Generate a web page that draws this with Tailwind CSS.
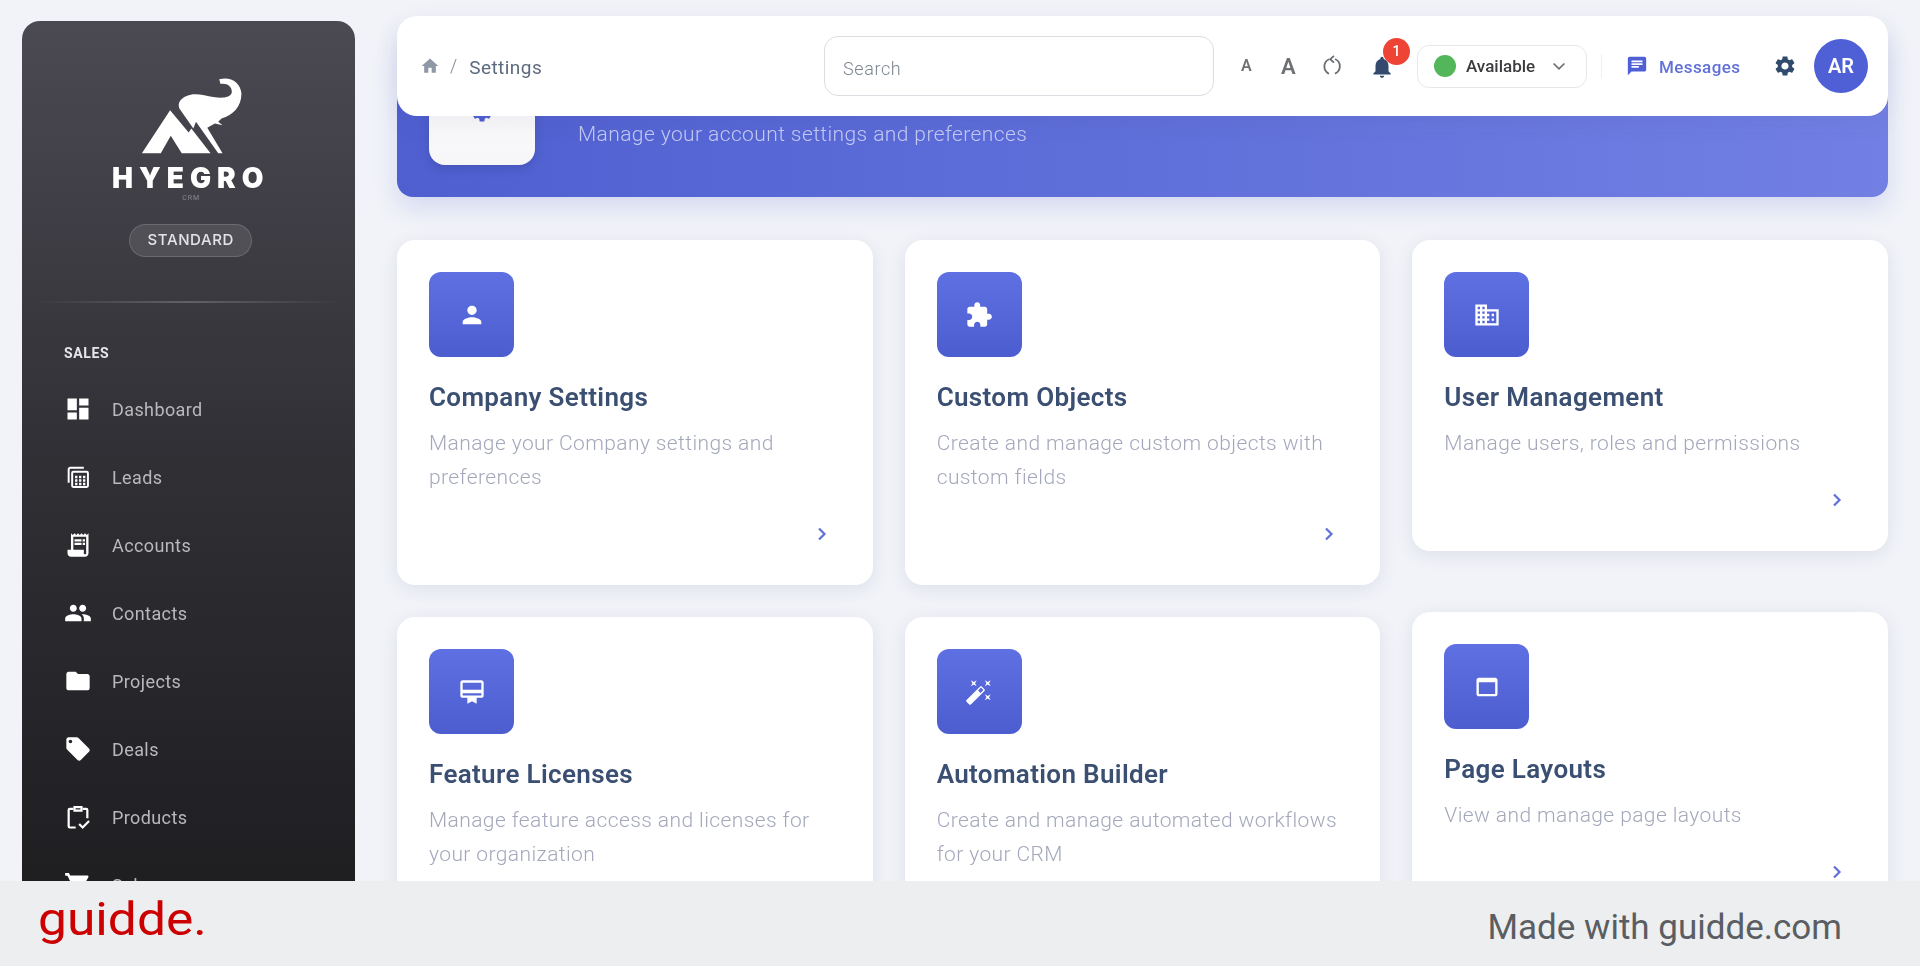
<!DOCTYPE html>
<html>
<head>
<meta charset="utf-8">
<title>Settings</title>
<script src="https://cdn.jsdelivr.net/npm/@tailwindcss/browser@4"></script>
</head>
<body class="bg-[#edeef0] font-[Roboto,sans-serif]">
<div class="w-[1920px] h-[966px] overflow-hidden flex flex-col">
  <div class="h-[881px] shrink-0 overflow-hidden bg-[#f1f3f8] flex pl-[21.5px] pr-[32px] blur-[0.6px]">
    <!-- Sidebar -->
    <aside class="w-[333.5px] shrink-0 mt-[21px] h-[900px] rounded-t-[18px] bg-gradient-to-b from-[#4b4a53] via-[#302f34] to-[#1d1d20] flex flex-col items-stretch">
      <div class="flex flex-col items-center">
        <svg class="mt-[57px] ml-[5px]" width="102" height="77" viewBox="150 58 306 232" fill="#fff">
          <path d="M240 155L296 222L304 210L362 285H275L242 232L212 285H155Z"/>
          <path d="M268 150C262 135 270 120 290 112C315 100 345 112 370 115C395 120 418 118 425 105C430 88 415 72 392 76L388 62C420 52 452 70 455 105C455 145 430 170 395 180L385 190L398 200L375 195L352 208L398 285H385L318 190L310 210Z"/>
        </svg>
        <div class="mt-[10px] ml-[5px] h-[26px] leading-[26px] text-[28px] font-black text-white tracking-[6px] font-[Inter,sans-serif]">HYEGRO</div>
        <div class="mt-[2px] ml-[6px] h-[10px] leading-[10px] text-[7px] text-[#8a8a90] tracking-[1px]">CRM</div>
        <div class="mt-[21px] ml-[5px] w-[123px] h-[33px] rounded-full bg-white/10 border border-white/15 flex items-center justify-center text-[15px] font-medium text-[#e4e4e8] tracking-[0.6px] font-[Inter,sans-serif]">STANDARD</div>
      </div>
      <div class="mt-[44px] mx-[12px] h-[2px] bg-gradient-to-r from-transparent via-white/20 to-transparent"></div>
      <div class="mt-[40px] pl-[42.5px] text-[14px] font-bold text-[#e6e6e8] tracking-[0.6px] leading-[20px]">SALES</div>
      <nav class="mt-[12px] pl-[42.5px] flex flex-col text-[18px] text-[#b9b9bd] tracking-[0.4px]">
        <a class="h-[68px] flex items-center gap-[20px]"><svg width="28" height="28" viewBox="0 0 24 24" fill="#fff"><path d="M3 13h8V3H3v10zm0 8h8v-6H3v6zm10 0h8V11h-8v10zm0-18v6h8V3h-8z"/></svg>Dashboard</a>
        <a class="h-[68px] flex items-center gap-[20px]"><svg width="28" height="28" viewBox="0 0 24 24" fill="none" stroke="#fff" stroke-width="1.7"><path d="M4 17V5.5A1.5 1.5 0 0 1 5.5 4H17"/><path d="M7 19.5V8.5A1 1 0 0 1 8 7.5h11.5a1 1 0 0 1 1 1v11a1 1 0 0 1-1 1H8a1 1 0 0 1-1-1z"/><path d="M9.5 12h9M9.5 15h9M9.5 18h9" stroke-width="2" stroke-dasharray="2 1.4"/></svg>Leads</a>
        <a class="h-[68px] flex items-center gap-[20px]"><svg width="28" height="28" viewBox="0 0 24 24" fill="#fff"><path d="M19.5 3.5L18 2l-1.5 1.5L15 2l-1.5 1.5L12 2l-1.5 1.5L9 2 7.5 3.5 6 2v14H3v3c0 1.66 1.34 3 3 3h12c1.66 0 3-1.34 3-3V2l-1.5 1.5zM19 19c0 .55-.45 1-1 1s-1-.45-1-1v-3H8V5h11v14zM9 7h6v2H9zm7 0h2v2h-2zM9 10h6v2H9zm7 0h2v2h-2z"/></svg>Accounts</a>
        <a class="h-[68px] flex items-center gap-[20px]"><svg width="28" height="28" viewBox="0 0 24 24" fill="#fff"><path d="M16 11c1.66 0 2.99-1.34 2.99-3S17.66 5 16 5c-1.66 0-3 1.34-3 3s1.34 3 3 3zm-8 0c1.66 0 2.99-1.34 2.99-3S9.66 5 8 5C6.34 5 5 6.34 5 8s1.34 3 3 3zm0 2c-2.33 0-7 1.17-7 3.5V19h14v-2.5c0-2.33-4.67-3.5-7-3.5zm8 0c-.29 0-.62.02-.97.05 1.16.84 1.97 1.97 1.97 3.45V19h6v-2.5c0-2.33-4.67-3.5-7-3.5z"/></svg>Contacts</a>
        <a class="h-[68px] flex items-center gap-[20px]"><svg width="28" height="28" viewBox="0 0 24 24" fill="#fff"><path d="M10 4H4c-1.1 0-1.99.9-1.99 2L2 18c0 1.1.9 2 2 2h16c1.1 0 2-.9 2-2V8c0-1.1-.9-2-2-2h-8l-2-2z"/></svg>Projects</a>
        <a class="h-[68px] flex items-center gap-[20px]"><svg width="28" height="28" viewBox="0 0 24 24" fill="#fff"><path d="M21.41 11.58l-9-9C12.05 2.22 11.55 2 11 2H4c-1.1 0-2 .9-2 2v7c0 .55.22 1.05.59 1.42l9 9c.36.36.86.58 1.41.58.55 0 1.05-.22 1.41-.59l7-7c.37-.36.59-.86.59-1.41 0-.55-.23-1.06-.59-1.42zM5.5 7C4.67 7 4 6.33 4 5.5S4.67 4 5.5 4 7 4.67 7 5.5 6.33 7 5.5 7z"/></svg>Deals</a>
        <a class="h-[68px] flex items-center gap-[20px]"><svg width="28" height="28" viewBox="0 0 24 24" fill="none" stroke="#fff" stroke-width="1.9"><path d="M8 5H5a1 1 0 0 0-1 1v14a1 1 0 0 0 1 1h5"/><path d="M16 5h3a1 1 0 0 1 1 1v7"/><path d="M9 3.5h6v3H9z"/><path d="M13 18l3 3 5.5-5.5"/></svg>Products</a>
        <a class="h-[68px] flex items-center gap-[20px]"><svg width="28" height="28" viewBox="0 0 24 24" fill="#fff"><path d="M7 18c-1.1 0-1.99.9-1.99 2S5.9 22 7 22s2-.9 2-2-.9-2-2-2zM1 2v2h2l3.6 7.59-1.35 2.45c-.16.28-.25.61-.25.96 0 1.1.9 2 2 2h12v-2H7.42c-.14 0-.25-.11-.25-.25l.03-.12.9-1.83h7.45c.75 0 1.41-.41 1.75-1.03l3.58-6.49c.08-.14.12-.31.12-.48 0-.55-.45-1-1-1H5.21l-.94-2H1z"/></svg>Sales</a>
      </nav>
    </aside>

    <!-- Main -->
    <main class="relative ml-[42px] w-[1491px] shrink-0 pt-[27px]">
      <!-- Top bar floats over the banner -->
      <header class="absolute z-10 top-[16px] left-0 right-0 h-[100px] bg-white rounded-[20px] shadow-[0_6px_24px_rgba(60,70,120,0.08)] flex items-center pl-[23px] pr-[20px]">
        <div class="w-[404px] flex items-center">
          <svg width="20" height="20" viewBox="0 0 24 24" fill="#8f98a6"><path d="M10 20v-6h4v6h5v-8h3L12 3 2 12h3v8z"/></svg>
          <span class="ml-[10px] text-[18px] font-light text-[#7c8594] relative -top-[1px]">/</span>
          <span class="ml-[12px] text-[19px] tracking-[0.45px] text-[#5d6a7e] relative top-[2px]">Settings</span>
        </div>
        <div class="w-[390px] h-[60px] rounded-[14px] border border-[#dcdde2] flex items-center pl-[18px]"><span class="text-[18px] tracking-[0.6px] font-light text-[#7d8592] relative top-[2px]">Search</span></div>
        <div class="ml-[27px] w-[16px] text-[16px] font-semibold text-[#6f7072]">A</div>
        <div class="ml-[24px] w-[20px] text-[22px] font-semibold text-[#6f7072]">A</div>
        <svg class="ml-[19px]" width="24" height="24" viewBox="0 0 24 24" fill="none" stroke="#6a6d70" stroke-width="1.8"><path d="M9 5.2A8 8 0 0 0 9 19.7"/><path d="M15 5A8 8 0 0 1 15 19.7"/><path d="M14 1.800L10.200 5.200L14 8.600"/></svg>
        <div class="relative ml-[25px] w-[26px] h-[26px] top-[1px]">
          <svg width="26" height="26" viewBox="0 0 24 24" fill="#33496d"><path d="M12 22c1.100 0 2-.9 2-2h-4c0 1.100.9 2 2 2zm6-6v-5c0-3.070-1.630-5.640-4.500-6.320V4c0-.83-.67-1.500-1.500-1.500s-1.500.67-1.500 1.500v.68C7.640 5.360 6 7.920 6 11v5l-2 2v1h16v-1l-2-2z"/></svg>
          <span class="absolute -top-[16px] left-[14px] w-[27px] h-[27px] rounded-full bg-[#ee4435] text-white text-[14px] font-medium flex items-center justify-center">1</span>
        </div>
        <div class="ml-[22px] w-[170px] h-[43px] rounded-[12px] border border-[#e6e7ea] flex items-center pl-[16px]">
          <span class="w-[22px] h-[22px] rounded-full bg-[#54b65a]"></span>
          <span class="ml-[10px] text-[17px] font-medium text-[#3c3c3e] relative top-[1px]">Available</span>
          <svg class="ml-[14px]" width="20" height="20" viewBox="0 0 24 24" fill="none" stroke="#6a6d70" stroke-width="2"><path d="M5.500 9L12 15.500L18.500 9"/></svg>
        </div>
        <div class="ml-[14px] w-px h-[24px] bg-[#eef0f3]"></div>
        <svg class="ml-[24px]" width="22" height="22" viewBox="0 0 24 24" fill="#4f60d6"><path d="M20 2H4c-1.100 0-1.990.9-1.990 2L2 22l4-4h14c1.100 0 2-.9 2-2V4c0-1.100-.9-2-2-2zM6 9h12v2H6V9zm8 5H6v-2h8v2zm4-6H6V6h12v2z"/></svg>
        <span class="ml-[11px] w-[81px] whitespace-nowrap text-[17px] tracking-[0.4px] font-medium text-[#6070d8] relative top-[2px]">Messages</span>
        <svg class="ml-[32.500px]" width="24" height="24" viewBox="0 0 24 24" fill="#2f4a6b"><path d="M19.140 12.940c.04-.3.06-.61.06-.94 0-.32-.02-.64-.07-.94l2.030-1.580c.18-.14.23-.41.12-.61l-1.920-3.320c-.12-.22-.37-.29-.59-.22l-2.390.96c-.5-.38-1.030-.7-1.620-.94l-.36-2.540c-.04-.24-.24-.41-.48-.41h-3.840c-.24 0-.43.17-.47.41l-.36 2.540c-.59.24-1.130.57-1.620.94l-2.390-.96c-.22-.08-.47 0-.59.22L2.740 8.870c-.12.21-.08.47.12.61l2.030 1.580c-.05.3-.09.63-.09.94s.02.64.07.94l-2.030 1.580c-.18.14-.23.41-.12.61l1.920 3.320c.12.22.37.29.59.22l2.390-.96c.5.38 1.030.7 1.620.94l.36 2.540c.05.24.24.41.48.41h3.840c.24 0 .44-.17.47-.41l.36-2.540c.59-.24 1.130-.56 1.620-.94l2.390.96c.22.08.47 0 .59-.22l1.920-3.320c.12-.22.07-.47-.12-.61l-2.010-1.580zM12 15.600c-1.980 0-3.600-1.620-3.600-3.600s1.620-3.600 3.600-3.600 3.600 1.620 3.600 3.600-1.620 3.600-3.600 3.600z"/></svg>
        <div class="ml-[17.500px] w-[54px] h-[54px] rounded-full bg-[#4f60d6] text-white text-[20px] font-semibold flex items-center justify-center">AR</div>
      </header>

      <!-- Banner -->
      <section class="h-[170px] rounded-[16px] bg-gradient-to-r from-[#4f5fd0] to-[#7280e4] shadow-[0_10px_24px_rgba(79,95,208,0.18)] flex items-end pl-[32px] pb-[32px]">
        <div class="w-[106px] h-[106px] rounded-[16px] bg-gradient-to-b from-white to-[#f6f6f8] shadow-[0_4px_10px_rgba(30,40,100,0.2)] flex items-center justify-center">
          <svg width="24" height="24" viewBox="0 0 24 24" fill="#4f5fd0"><path d="M19.140 12.940c.04-.3.06-.61.06-.94 0-.32-.02-.64-.07-.94l2.030-1.580c.18-.14.23-.41.12-.61l-1.920-3.320c-.12-.22-.37-.29-.59-.22l-2.390.96c-.5-.38-1.030-.7-1.620-.94l-.36-2.540c-.04-.24-.24-.41-.48-.41h-3.840c-.24 0-.43.17-.47.41l-.36 2.540c-.59.24-1.130.57-1.620.94l-2.390-.96c-.22-.08-.47 0-.59.22L2.740 8.870c-.12.21-.08.47.12.61l2.030 1.580c-.05.3-.09.63-.09.94s.02.64.07.94l-2.030 1.580c-.18.14-.23.41-.12.61l1.920 3.320c.12.22.37.29.59.22l2.390-.96c.5.38 1.030.7 1.620.94l.36 2.540c.05.24.24.41.48.41h3.840c.24 0 .44-.17.47-.41l.36-2.540c.59-.24 1.130-.56 1.620-.94l2.390.96c.22.08.47 0 .59-.22l1.920-3.320c.12-.22.07-.47-.12-.61l-2.010-1.580zM12 15.600c-1.980 0-3.600-1.620-3.600-3.600s1.620-3.600 3.600-3.600 3.600 1.620 3.600 3.600-1.620 3.600-3.600 3.600z"/></svg>
        </div>
        <p class="ml-[43px] mb-[19px] text-[21px] leading-[24px] font-light text-[#c4caf3] tracking-[0.4px]">Manage your account settings and preferences</p>
      </section>

      <!-- Cards -->
      <div class="mt-[43px] grid grid-cols-3 gap-[32px] items-start">
        <div class="flex flex-col gap-[32px]">
          <div class="bg-white rounded-[18px] shadow-[0_4px_18px_rgba(60,70,120,0.1)] flex flex-col pt-[32px] pl-[32px] pb-[39px] pr-[32px]">
            <div class="w-[85px] h-[85px] rounded-[12px] bg-gradient-to-b from-[#5f70e3] to-[#4c5dd0] flex items-center justify-center"><svg width="28" height="28" viewBox="0 0 24 24" fill="#fff"><path d="M12 12c2.210 0 4-1.790 4-4s-1.790-4-4-4-4 1.790-4 4 1.790 4 4 4zm0 2c-2.670 0-8 1.340-8 4v2h16v-2c0-2.660-5.330-4-8-4z"/></svg></div>
            <h3 class="mt-[24px] text-[26px] leading-[32px] tracking-[0.35px] font-semibold text-[#3a4f72]">Company Settings</h3>
            <p class="mt-[13px] text-[21px] leading-[34px] tracking-[0.4px] font-light text-[#a4a8bb]">Manage your Company settings and preferences</p>
            <svg class="mt-[28px] mr-[7px] self-end" width="24" height="24" viewBox="0 0 24 24" fill="none" stroke="#6070d8" stroke-width="2.2"><path d="M9 6.500L14.500 12L9 17.500"/></svg>
          </div>
          <div class="bg-white rounded-[18px] shadow-[0_4px_18px_rgba(60,70,120,0.1)] flex flex-col pt-[32px] pl-[32px] pb-[39px] pr-[32px]">
            <div class="w-[85px] h-[85px] rounded-[12px] bg-gradient-to-b from-[#5f70e3] to-[#4c5dd0] flex items-center justify-center"><svg width="28" height="28" viewBox="0 0 24 24" fill="#fff"><path d="M20 2H4c-1.110 0-2 .89-2 2v11c0 1.110.89 2 2 2h4v5l4-2 4 2v-5h4c1.110 0 2-.89 2-2V4c0-1.110-.89-2-2-2zm0 13H4v-2h16v2zm0-5H4V4h16v6z"/></svg></div>
            <h3 class="mt-[24px] text-[26px] leading-[32px] tracking-[0.35px] font-semibold text-[#3a4f72]">Feature Licenses</h3>
            <p class="mt-[13px] text-[21px] leading-[34px] tracking-[0.4px] font-light text-[#a4a8bb]">Manage feature access and licenses for your organization</p>
            <svg class="mt-[28px] mr-[7px] self-end" width="24" height="24" viewBox="0 0 24 24" fill="none" stroke="#6070d8" stroke-width="2.2"><path d="M9 6.500L14.500 12L9 17.500"/></svg>
          </div>
        </div>
        <div class="flex flex-col gap-[32px]">
          <div class="bg-white rounded-[18px] shadow-[0_4px_18px_rgba(60,70,120,0.1)] flex flex-col pt-[32px] pl-[32px] pb-[39px] pr-[32px]">
            <div class="w-[85px] h-[85px] rounded-[12px] bg-gradient-to-b from-[#5f70e3] to-[#4c5dd0] flex items-center justify-center"><svg width="28" height="28" viewBox="0 0 24 24" fill="#fff"><path d="M20.500 11H19V7c0-1.100-.9-2-2-2h-4V3.500C13 2.120 11.880 1 10.500 1S8 2.120 8 3.500V5H4c-1.100 0-1.990.9-1.990 2v3.800H3.500c1.490 0 2.700 1.210 2.700 2.700s-1.210 2.700-2.700 2.700H2V20c0 1.100.9 2 2 2h3.800v-1.500c0-1.490 1.210-2.700 2.700-2.700 1.490 0 2.700 1.210 2.700 2.700V22H17c1.100 0 2-.9 2-2v-4h1.500c1.380 0 2.500-1.120 2.500-2.500S21.880 11 20.500 11z"/></svg></div>
            <h3 class="mt-[24px] text-[26px] leading-[32px] tracking-[0.35px] font-semibold text-[#3a4f72]">Custom Objects</h3>
            <p class="mt-[13px] text-[21px] leading-[34px] tracking-[0.4px] font-light text-[#a4a8bb]">Create and manage custom objects with custom fields</p>
            <svg class="mt-[28px] mr-[7px] self-end" width="24" height="24" viewBox="0 0 24 24" fill="none" stroke="#6070d8" stroke-width="2.2"><path d="M9 6.500L14.500 12L9 17.500"/></svg>
          </div>
          <div class="bg-white rounded-[18px] shadow-[0_4px_18px_rgba(60,70,120,0.1)] flex flex-col pt-[32px] pl-[32px] pb-[39px] pr-[32px]">
            <div class="w-[85px] h-[85px] rounded-[12px] bg-gradient-to-b from-[#5f70e3] to-[#4c5dd0] flex items-center justify-center"><svg width="28" height="28" viewBox="0 0 24 24" fill="#fff"><path d="M7.500 5.600L10 7 8.600 4.500 10 2 7.500 3.400 5 2l1.400 2.500L5 7zm12 9.800L17 14l1.400 2.500L17 19l2.500-1.400L22 19l-1.400-2.500L22 14zM22 2l-2.500 1.400L17 2l1.400 2.500L17 7l2.500-1.400L22 7l-1.400-2.500zm-7.630 5.290c-.39-.39-1.020-.39-1.410 0L1.290 18.960c-.39.39-.39 1.020 0 1.410l2.340 2.340c.39.39 1.020.39 1.410 0L16.700 11.050c.39-.39.39-1.020 0-1.410l-2.330-2.350zm-1.030 5.490l-2.120-2.120 2.440-2.440 2.120 2.120-2.440 2.440z"/></svg></div>
            <h3 class="mt-[24px] text-[26px] leading-[32px] tracking-[0.35px] font-semibold text-[#3a4f72]">Automation Builder</h3>
            <p class="mt-[13px] text-[21px] leading-[34px] tracking-[0.4px] font-light text-[#a4a8bb]">Create and manage automated workflows for your CRM</p>
            <svg class="mt-[28px] mr-[7px] self-end" width="24" height="24" viewBox="0 0 24 24" fill="none" stroke="#6070d8" stroke-width="2.2"><path d="M9 6.500L14.500 12L9 17.500"/></svg>
          </div>
        </div>
        <div class="flex flex-col gap-[61px]">
          <div class="bg-white rounded-[18px] shadow-[0_4px_18px_rgba(60,70,120,0.1)] flex flex-col pt-[32px] pl-[32px] pb-[39px] pr-[32px]">
            <div class="w-[85px] h-[85px] rounded-[12px] bg-gradient-to-b from-[#5f70e3] to-[#4c5dd0] flex items-center justify-center"><svg width="28" height="28" viewBox="0 0 24 24" fill="#fff"><path d="M12 7V3H2v18h20V7H12zM6 19H4v-2h2v2zm0-4H4v-2h2v2zm0-4H4V9h2v2zm0-4H4V5h2v2zm4 12H8v-2h2v2zm0-4H8v-2h2v2zm0-4H8V9h2v2zm0-4H8V5h2v2zm10 12h-8v-2h2v-2h-2v-2h2v-2h-2V9h8v10zm-2-8h-2v2h2v-2zm0 4h-2v2h2v-2z"/></svg></div>
            <h3 class="mt-[24px] text-[26px] leading-[32px] tracking-[0.35px] font-semibold text-[#3a4f72]">User Management</h3>
            <p class="mt-[13px] text-[21px] leading-[34px] tracking-[0.4px] font-light text-[#a4a8bb]">Manage users, roles and permissions</p>
            <svg class="mt-[28px] mr-[7px] self-end" width="24" height="24" viewBox="0 0 24 24" fill="none" stroke="#6070d8" stroke-width="2.2"><path d="M9 6.500L14.500 12L9 17.500"/></svg>
          </div>
          <div class="bg-white rounded-[18px] shadow-[0_4px_18px_rgba(60,70,120,0.1)] flex flex-col pt-[32px] pl-[32px] pb-[39px] pr-[32px]">
            <div class="w-[85px] h-[85px] rounded-[12px] bg-gradient-to-b from-[#5f70e3] to-[#4c5dd0] flex items-center justify-center"><svg width="28" height="28" viewBox="0 0 24 24" fill="#fff"><path d="M19 4H5c-1.110 0-2 .9-2 2v12c0 1.100.89 2 2 2h14c1.100 0 2-.9 2-2V6c0-1.100-.89-2-2-2zm0 14H5V8h14v10z"/></svg></div>
            <h3 class="mt-[24px] text-[26px] leading-[32px] tracking-[0.35px] font-semibold text-[#3a4f72]">Page Layouts</h3>
            <p class="mt-[13px] text-[21px] leading-[34px] tracking-[0.4px] font-light text-[#a4a8bb]">View and manage page layouts</p>
            <svg class="mt-[28px] mr-[7px] self-end" width="24" height="24" viewBox="0 0 24 24" fill="none" stroke="#6070d8" stroke-width="2.2"><path d="M9 6.500L14.500 12L9 17.500"/></svg>
          </div>
        </div>
      </div>
    </main>
  </div>

  <!-- Footer -->
  <footer class="h-[85px] shrink-0 bg-[#edeef0] flex items-center justify-between pl-[38px] pr-[78px]">
    <span class="text-[46px] leading-[60px] font-normal text-[#cc0000] origin-left scale-x-[1.12] relative -top-[5px]">guidde.</span>
    <span class="text-[35px] leading-[40px] text-[#5a5d62] relative top-[4px]">Made with guidde.com</span>
  </footer>
</div>
</body>
</html>
